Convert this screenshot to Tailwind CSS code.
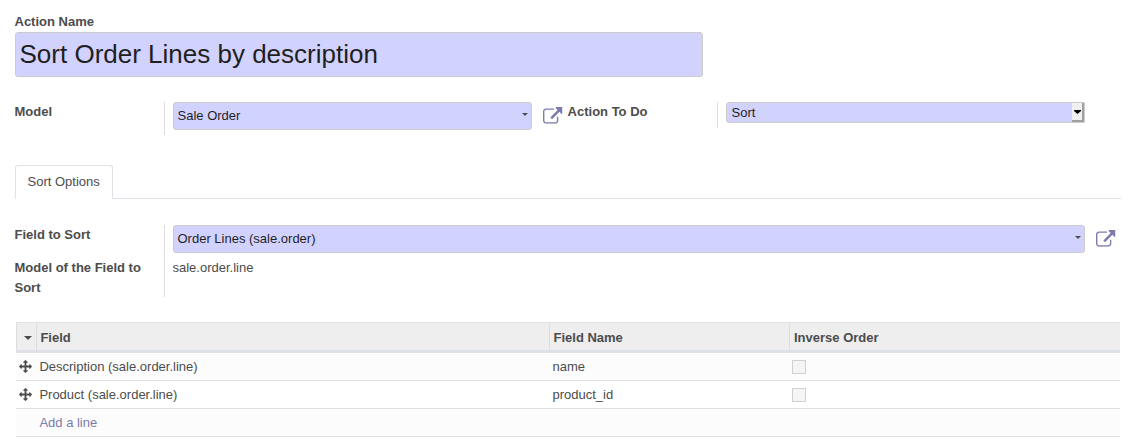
<!DOCTYPE html>
<html lang="en">
<head>
<meta charset="utf-8">
<title>Sort Order Lines</title>
<script src="https://cdn.jsdelivr.net/npm/@tailwindcss/browser@4"></script>
</head>
<body class="h-[440px] w-[1131px] overflow-hidden bg-white font-['Liberation_Sans',Arial,sans-serif] text-[13px] leading-5 text-[#4c4c4c]">
<svg class="hidden">
  <symbol id="external" viewBox="0 0 1792 1536"><path d="M1408 928v320q0 119-84.5 203.5t-203.5 84.5h-832q-119 0-203.5-84.5t-84.5-203.5v-832q0-119 84.5-203.5t203.5-84.5h704q14 0 23 9t9 23v64q0 14-9 23t-23 9h-704q-66 0-113 47t-47 113v832q0 66 47 113t113 47h832q66 0 113-47t47-113v-320q0-14 9-23t23-9h64q14 0 23 9t9 23zm384-864v512q0 26-19 45t-45 19-45-19l-176-176-652 652q-10 10-23 10t-23-10l-114-114q-10-10-10-23t10-23l652-652-176-176q-19-19-19-45t19-45 45-19h512q26 0 45 19t19 45z"/></symbol>
  <symbol id="move" viewBox="0 0 1792 1792"><path d="M1792 896q0 26-19 45l-256 256q-19 19-45 19t-45-19-19-45v-128h-384v384h128q26 0 45 19t19 45-19 45l-256 256q-19 19-45 19t-45-19l-256-256q-19-19-19-45t19-45 45-19h128v-384h-384v128q0 26-19 45t-45 19-45-19l-256-256q-19-19-19-45t19-45l256-256q19-19 45-19t45 19 19 45v128h384v-384h-128q-26 0-45-19t-19-45 19-45l256-256q19-19 45-19t45 19l256 256q19 19 19 45t-19 45-45 19h-128v384h384v-128q0-26 19-45t45-19 45 19l256 256q19 19 19 45z"/></symbol>
</svg>
<main class="w-[1121px] pl-[14.5px] pt-3">
  <label class="block h-5 font-bold leading-5">Action Name</label>
  <div class="ml-[0.5px] flex h-[45px] w-[688px] items-center rounded-[3px] border border-[#ccc] bg-[#d2d2ff] pb-0.5 pl-[3.5px] text-[26px] text-[#1f1f1f]">Sort Order Lines by description</div>

  <section class="mt-[25px] flex h-[33px] items-start">
    <label class="w-[149.5px] font-bold">Model</label>
    <div class="h-[33px] w-[9px] border-l border-[#ddd]"></div>
    <div class="flex h-7 w-[359px] items-center justify-between rounded-[3px] border border-[#ccc] bg-[#d2d2ff] pl-[3.5px] pr-[3px] text-[#1f1f1f]">
      <span>Sale Order</span>
      <svg class="mb-[3px] h-[3px] w-[6px] fill-[#4c4c4c]" viewBox="0 0 6 3"><path d="M0 0h6L3 3z"/></svg>
    </div>
    <svg class="ml-[11px] mt-[5px] h-[16.7px] w-[19.5px] fill-[#7c7bad]"><use href="#external"/></svg>
    <label class="ml-[5.1px] w-[149.4px] font-bold">Action To Do</label>
    <div class="h-[26px] w-[9px] border-l border-[#ddd]"></div>
    <div class="flex h-[21px] w-[359px] justify-between rounded-l-[3px] rounded-r-[1px] border border-[#ccc] bg-[#d2d2ff] pl-[4.5px] leading-[19px] text-[#1f1f1f]">
      <span>Sort</span>
      <span class="flex h-[19px] w-3 items-center justify-end border-b-2 border-r-2 border-[#a0a0a0] bg-[#f0f0f0] pr-px">
        <svg class="h-1 w-[7px] fill-black" viewBox="0 0 7 4"><path d="M0 0h7v1L3.5 4 0 1z"/></svg>
      </span>
    </div>
  </section>

  <nav class="ml-[0.5px] mt-[30px] flex h-[34px] border-b border-[#dee2e6]">
    <div class="-mb-px w-[98px] rounded-t-[3px] border border-b-0 border-[#dee2e6] bg-white pl-[11.5px] pt-[6px]">Sort Options</div>
  </nav>

  <section class="mt-[26px] flex h-[72px]">
    <div class="w-[149.5px] pr-2 font-bold">
      <p class="mb-[13px]">Field to Sort</p>
      <p>Model of the Field to Sort</p>
    </div>
    <div class="w-[9px] border-l border-[#ddd]"></div>
    <div class="w-[912px]">
      <div class="flex h-7 items-center justify-between rounded-[3px] border border-[#ccc] bg-[#d2d2ff] pl-[3.5px] pr-[3px] text-[#1f1f1f]">
        <span>Order Lines (sale.order)</span>
        <svg class="mb-[3px] h-[3px] w-[6px] fill-[#4c4c4c]" viewBox="0 0 6 3"><path d="M0 0h6L3 3z"/></svg>
      </div>
      <p class="-ml-[0.5px] mt-[5px]">sale.order.line</p>
    </div>
    <svg class="ml-[11px] mt-[5px] h-[16.7px] w-[19.5px] shrink-0 fill-[#7c7bad]"><use href="#external"/></svg>
  </section>

  <section class="ml-[1.5px] mr-px mt-[25px]">
    <div class="grid h-[31px] grid-cols-[20px_513px_240px_1fr] border-b-[3px] border-l border-t border-b-[#dee2e6] border-l-[#ddd] border-t-[#dee0e2] bg-[#eee] font-bold leading-[29px]">
      <div class="flex items-center justify-end border-r border-[#ddd] pr-1"><svg class="h-[4px] w-[8px] fill-[#4c4c4c]" viewBox="0 0 8 4"><path d="M0 0h8L4 4z"/></svg></div>
      <div class="border-r border-[#ddd] pl-[3.4px]">Field</div>
      <div class="border-r border-[#ddd] pl-[3.5px]">Field Name</div>
      <div class="pl-1">Inverse Order</div>
    </div>
    <div class="grid h-7 grid-cols-[20px_513px_240px_1fr] items-center border-b border-[#dfe0e5] bg-[#fcfcfc]">
      <svg class="ml-[3px] h-[13px] w-[13px] fill-[#4c4c4c]"><use href="#move"/></svg>
      <div class="pl-[3.4px]">Description (sale.order.line)</div>
      <div class="pl-[3.5px]">name</div>
      <div class="ml-[3px] h-3.5 w-3.5 border border-[#d0d0d0] bg-[#f5f5f5]"></div>
    </div>
    <div class="grid h-7 grid-cols-[20px_513px_240px_1fr] items-center border-b border-[#dfe0e5]">
      <svg class="ml-[3px] h-[13px] w-[13px] fill-[#4c4c4c]"><use href="#move"/></svg>
      <div class="pl-[3.4px]">Product (sale.order.line)</div>
      <div class="pl-[3.5px]">product_id</div>
      <div class="ml-[3px] h-3.5 w-3.5 border border-[#d0d0d0] bg-[#f5f5f5]"></div>
    </div>
    <div class="flex h-7 items-center border-b border-[#dfe0e5] bg-[#fcfcfc] pl-[23.4px] text-[#7c7bad]">Add a line</div>
  </section>
</main>
</body>
</html>
